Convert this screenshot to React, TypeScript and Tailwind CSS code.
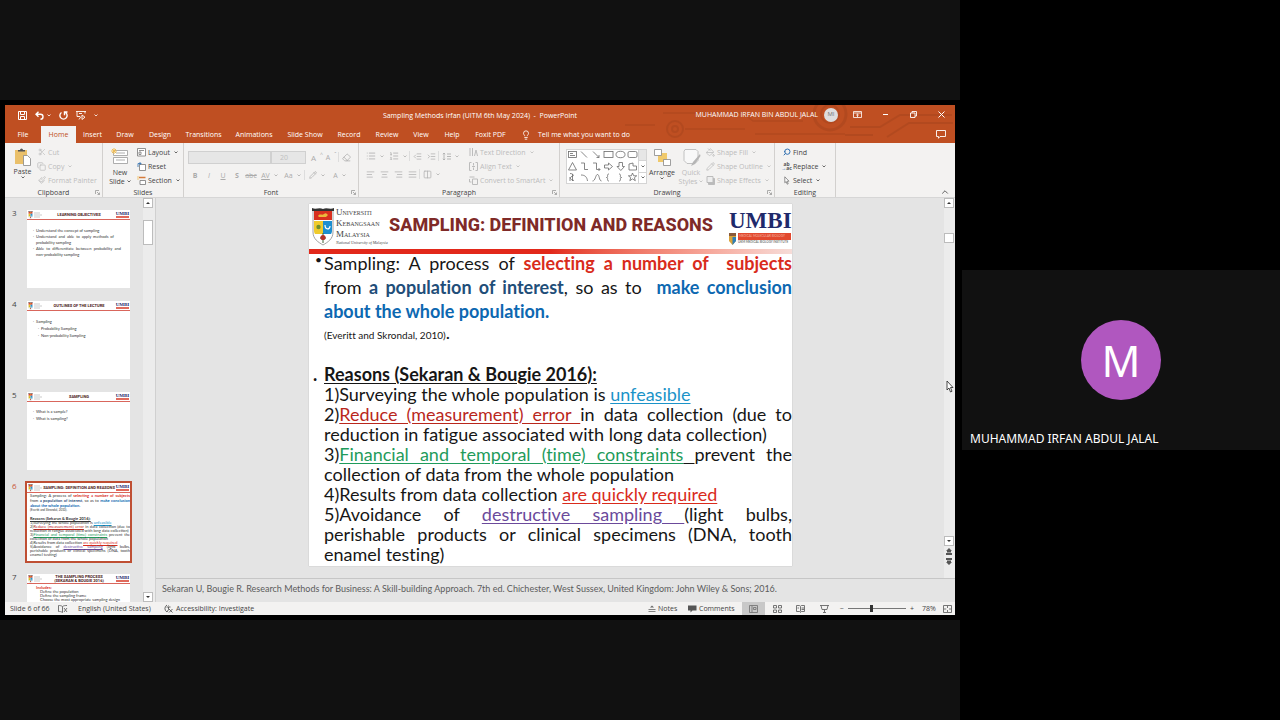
import type { ReactNode } from 'react';
import { clsx } from 'clsx';
import {
  AlignCenter,
  AlignJustify,
  AlignLeft,
  AlignRight,
  ChevronUp,
  Columns2,
  Copy,
  Eraser,
  Lightbulb,
  List,
  ListIndentDecrease,
  ListIndentIncrease,
  ListOrdered,
  Paintbrush,
  PaintBucket,
  Pencil,
  Scissors,
  Search,
} from 'lucide-react';

const tabs = [
  { label: 'File', width: 'w-[36px]' },
  { label: 'Home', width: 'w-[35px]' },
  { label: 'Insert', width: 'w-[33px]' },
  { label: 'Draw', width: 'w-[32px]' },
  { label: 'Design', width: 'w-[38px]' },
  { label: 'Transitions', width: 'w-[49px]' },
  { label: 'Animations', width: 'w-[52px]' },
  { label: 'Slide Show', width: 'w-[50px]' },
  { label: 'Record', width: 'w-[38px]' },
  { label: 'Review', width: 'w-[38px]' },
  { label: 'View', width: 'w-[30px]' },
  { label: 'Help', width: 'w-[32px]' },
  { label: 'Foxit PDF', width: 'w-[45px]' },
];

export default function App() {
  return (
    <main className="flex min-h-screen bg-black font-['Open_Sans',sans-serif]">
      <section className="flex w-3/4 flex-col justify-center bg-[#111111]">
        <div className="bg-black p-[5px]">
          <PowerPointWindow />
        </div>
      </section>
      <aside className="flex flex-1 flex-col justify-center pl-[2px]">
        <ParticipantTile name="MUHAMMAD IRFAN ABDUL JALAL" />
      </aside>
    </main>
  );
}

function ParticipantTile({ name }: { name: string }) {
  return (
    <div className="relative flex h-[180px] items-center justify-center bg-[#111111] font-['Noto_Sans',sans-serif] text-white">
      <div className="flex size-20 items-center justify-center rounded-full bg-[#b057bf] text-[43px] leading-none">
        {name[0]}
      </div>
      <p className="absolute bottom-[3px] left-2 text-[12px] leading-4">{name}</p>
    </div>
  );
}

function PowerPointWindow() {
  return (
    <div className="relative flex flex-col bg-[#e4e4e4] text-[7px] leading-[9px] text-[#444444]">
      <TitleBar />
      <Ribbon />
      <div className="flex h-[404px]">
        <ThumbnailPane />
        <div className="flex min-w-0 flex-1 flex-col border-l border-[#d0d0d0]">
          <div className="flex min-h-0 flex-1">
            <div className="flex flex-1 items-start justify-center pt-[6px] pl-px">
              <Slide />
            </div>
            <StageScrollbar />
          </div>
          <p className="h-[24px] border-t border-[#c6c6c6] px-[6px] pt-[4px] font-['Lato',sans-serif] text-[9px] leading-[12px] text-[#5c5c5c] [font-variant-ligatures:none]">
            Sekaran U, Bougie R. Research Methods for Business: A Skill-building Approach. 7th ed. Chichester, West Sussex, United Kingdom: John Wiley &amp; Sons; 2016.
          </p>
        </div>
      </div>
      <StatusBar />
      <svg viewBox="0 0 8 13" className="absolute top-[275px] right-[1px] h-[13px] w-[8px]">
        <path d="M1 1v9l2-2 1.500 4 1.500-.7L4.500 7.500H7z" fill="#fff" stroke="#222" strokeWidth=".8" />
      </svg>
    </div>
  );
}

/* ---------- title bar + tabs ---------- */

function TitleBar() {
  return (
    <header className="relative bg-[#bf4f22] text-white">
      <svg viewBox="0 0 330 38" className="absolute top-0 right-0 h-[38px] w-[330px]" fill="none" stroke="#a1421c" opacity=".4">
        <circle cx="50" cy="24" r="8" strokeWidth="2" />
        <circle cx="50" cy="24" r="3" strokeWidth="2" />
        <path d="M38 8h80l10 8h50M60 24h60M130 29h90M0 20h30" strokeWidth="1.500" />
        <circle cx="205" cy="9" r="16" strokeWidth="3" />
        <circle cx="205" cy="9" r="9" strokeWidth="2" />
        <path d="M225 22h30l20-12h52M262 32l22-14h44M220 30h28" strokeWidth="2" />
      </svg>
      <div className="relative flex h-[21px] items-center">
        <div className="flex w-[310px] items-center gap-[8px] pl-[13px]">
          <button aria-label="Save">
            <svg viewBox="0 0 9 9" className="size-[9px]" fill="none" stroke="currentColor">
              <path d="M.5.5h8v8h-8zM2.500.5v3h4v-3M2.500 8.500v-3h4v3" />
            </svg>
          </button>
          <button aria-label="Undo" className="flex items-center gap-[3px]">
            <svg viewBox="0 0 9 9" className="size-[9px]" fill="none" stroke="currentColor" strokeWidth="1.400">
              <path d="M3.500.7 1 3.200l2.500 2.500M1 3.200h4.500a2.500 2.500 0 0 1 0 5" />
            </svg>
            <Caret />
          </button>
          <button aria-label="Redo">
            <svg viewBox="0 0 9 9" className="size-[9px]" fill="none" stroke="currentColor" strokeWidth="1.400">
              <path d="M2.500 1.500a3.600 3.600 0 1 0 4 0M5.500 4.200V1h3" />
            </svg>
          </button>
          <button aria-label="Start slide show">
            <svg viewBox="0 0 10 9" className="h-[9px] w-[10px]" fill="none" stroke="currentColor" strokeWidth=".9">
              <path d="M0 .5h10M1 .5v5h3M9 .5v2M3 8.500l2-3M3 2.500h3M6 4l3 2.200L6 8.500z" />
            </svg>
          </button>
          <button aria-label="Customize toolbar">
            <Caret />
          </button>
        </div>
        <h1 className="flex-1 text-center">Sampling Methods Irfan (UITM 6th May 2024)&nbsp; -&nbsp; PowerPoint</h1>
        <div className="flex w-[310px] items-center justify-end pb-[2px]">
          <span className="mr-[6px]">MUHAMMAD IRFAN BIN ABDUL JALAL</span>
          <span className="mr-[6px] flex size-[14px] items-center justify-center rounded-full bg-[#dedede] text-[6px] text-[#777777]">MI</span>
          <div className="grid w-[111px] grid-cols-4 justify-items-center">
            <button aria-label="Ribbon display options">
              <svg viewBox="0 0 9 7" className="h-[7px] w-[9px]" fill="none" stroke="currentColor">
                <path d="M.5.5h8v6h-8zM.5 2h8M4.500 6V3.200M3.200 4.300l1.300-1.200 1.300 1.200" strokeWidth=".8" />
              </svg>
            </button>
            <button aria-label="Minimize">
              <svg viewBox="0 0 7 7" className="size-[7px]" stroke="currentColor"><path d="M1 3.500h5" /></svg>
            </button>
            <button aria-label="Restore">
              <svg viewBox="0 0 7 7" className="size-[7px]" fill="none" stroke="currentColor">
                <path d="M.5 2h4.500v4.500H.5zM2 2V.5h4.500V5H5" strokeWidth=".9" />
              </svg>
            </button>
            <button aria-label="Close">
              <svg viewBox="0 0 7 7" className="size-[7px]" stroke="currentColor"><path d="m.5.5 6 6m0-6-6 6" /></svg>
            </button>
          </div>
        </div>
      </div>
      <nav className="relative flex h-[17px] items-stretch">
        {tabs.map(tab => (
          <button
            key={tab.label}
            className={clsx(
              'shrink-0 text-center whitespace-nowrap',
              tab.width,
              tab.label === 'Home' && 'bg-[#f3f2f1] text-[#bf4f22]'
            )}
          >
            {tab.label}
          </button>
        ))}
        <button className="ml-[8px] flex items-center gap-[7px]">
          <Lightbulb className="size-[10px]" />
          Tell me what you want to do
        </button>
        <button aria-label="Comments" className="mr-[9px] ml-auto">
          <svg viewBox="0 0 10 9" className="h-[9px] w-[10px]" fill="none" stroke="currentColor" strokeWidth=".9">
            <path d="M.5.5h9v6H4L2.500 8.300V6.500h-2z" />
          </svg>
        </button>
      </nav>
    </header>
  );
}

function Caret() {
  return (
    <svg viewBox="0 0 4 3" className="h-[3px] w-[4px] shrink-0" fill="none" stroke="currentColor" strokeWidth=".8">
      <path d="m.5.5 1.500 1.500L3.500.5" />
    </svg>
  );
}

/* ---------- ribbon ---------- */

function Group({ label, width, launcher, children }: { label: string; width: string; launcher?: boolean; children: ReactNode }) {
  return (
    <section className={clsx('relative flex shrink-0 flex-col border-r border-[#d2d0ce]', width)}>
      <div className="flex h-[45px] pt-[2px]">{children}</div>
      <h2 className="text-center">{label}</h2>
      {launcher && (
        <button aria-label={`${label} options`} className="absolute right-[2px] bottom-[2px]">
          <svg viewBox="0 0 5 5" className="size-[5px]" fill="none" stroke="#999999" strokeWidth=".8">
            <path d="M.5 4V.5H4M2 2l2.500 2.500M4.500 2.500v2h-2" />
          </svg>
        </button>
      )}
    </section>
  );
}

function Row({ icon, label, caret, off }: { icon: ReactNode; label: string; caret?: boolean; off?: boolean }) {
  return (
    <button className={clsx('flex h-[14px] items-center gap-[2px] whitespace-nowrap', off && 'text-[#bcbcbc]')}>
      <span className="flex w-[9px] justify-center">{icon}</span>
      {label}
      {caret && <span className="pl-[2px]"><Caret /></span>}
    </button>
  );
}

function Tool({ label, wide, children }: { label: string; wide?: boolean; children: ReactNode }) {
  return (
    <button aria-label={label} className={clsx('flex h-[14px] items-center justify-center gap-[4px]', wide ? 'w-[23px]' : 'w-[14px]')}>
      {children}
      {wide && <Caret />}
    </button>
  );
}

function Divider() {
  return <span className="h-[10px] w-px bg-[#dddddd]" />;
}

function Ribbon() {
  return (
    <div className="relative flex h-[55px] border-b border-[#d6d6d6] bg-[#f3f2f1]">
      <Group label="Clipboard" width="w-[98px]" launcher>
        <button className="flex w-[32px] flex-col items-center pt-[3px] pl-[3px]">
          <svg viewBox="0 0 18 18" className="size-[18px]">
            <rect x="1" y="2" width="12" height="14" fill="#eac06a" />
            <path d="M4 3.500V2h2a1.500 1.500 0 0 1 3 0h2v1.500z" fill="#555" />
            <path d="M9.500 7.500h4l3 3v7h-7z" fill="#fff" stroke="#888" strokeWidth=".8" />
          </svg>
          <span className="pt-[1px]">Paste</span>
          <Caret />
        </button>
        <div>
          <Row off label="Cut" icon={<Scissors className="size-[8px]" />} />
          <Row off caret label="Copy" icon={<Copy className="size-[9px]" />} />
          <Row off label="Format Painter" icon={<Paintbrush className="size-[8px]" />} />
        </div>
      </Group>

      <Group label="Slides" width="w-[81px]">
        <button className="flex w-[34px] flex-col items-center pt-[3px]">
          <svg viewBox="0 0 18 17" className="h-[17px] w-[18px]" fill="#fff" stroke="#999">
            <path d="M2.500 2.500h14v5h-14zM2.500 9.500h14v6h-14zM5 5h9M5 12h9" strokeWidth=".8" />
            <path d="M3 0v6M0 3h6M1 1l4 4m0-4L1 5" stroke="#f0bd55" />
          </svg>
          <span className="pt-[3px]">New</span>
          <span className="flex items-center gap-[2px]">Slide <Caret /></span>
        </button>
        <div>
          <Row
            caret
            label="Layout"
            icon={<svg viewBox="0 0 9 9" className="size-[9px]" fill="#fff" stroke="#777" strokeWidth=".8"><path d="M.5.5h8v7.500h-8zM2 2.500h5M2 4h2v2.500H2z" /></svg>}
          />
          <Row
            label="Reset"
            icon={<svg viewBox="0 0 9 9" className="size-[9px]" fill="#fff" stroke="#777" strokeWidth=".8"><path d="M2.500 2.500h6V8.500h-6z" /><path d="M1 5V1.500h3.500M3 0v3" stroke="#2f6fb0" fill="none" /></svg>}
          />
          <Row
            caret
            label="Section"
            icon={<svg viewBox="0 0 9 9" className="size-[9px]" fill="#fff" stroke="#777" strokeWidth=".8"><path d="M3 4.500h5.500V8.500H3z" /><path d="M2 1.500h6.500" stroke="#d57b3a" strokeWidth="1.500" /><path d="M1 0v4" stroke="#f0bd55" /></svg>}
          />
        </div>
      </Group>

      <Group label="Font" width="w-[175px]" launcher>
        <div className="flex flex-1 flex-col gap-[4px] pt-[5px] pl-[4px] text-[#ababab]">
          <div className="flex h-[14px] items-center">
            <select aria-label="Font" disabled className="h-[13px] w-[83px] appearance-none border border-[#d0d0d0] bg-[#e6e6e6]" />
            <select aria-label="Font size" disabled className="mr-[4px] h-[13px] w-[35px] appearance-none border border-[#d0d0d0] bg-[#e6e6e6] pl-[8px] text-[7px] text-[#c0c0c0]">
              <option>20</option>
            </select>
            <Tool label="Increase font size"><span className="text-[8px]">A</span><sup>^</sup></Tool>
            <Tool label="Decrease font size">A<sup>ˇ</sup></Tool>
            <Divider />
            <Tool label="Clear formatting"><Eraser className="size-[9px]" /></Tool>
          </div>
          <div className="flex h-[14px] items-center">
            <Tool label="Bold"><b>B</b></Tool>
            <Tool label="Italic"><i>I</i></Tool>
            <Tool label="Underline"><u>U</u></Tool>
            <Tool label="Shadow"><b>S</b></Tool>
            <Tool label="Strikethrough"><s>abc</s></Tool>
            <Tool label="Character spacing" wide><u>AV</u></Tool>
            <Tool label="Change case" wide>Aa</Tool>
            <Divider />
            <Tool label="Highlight" wide><Pencil className="size-[8px]" /></Tool>
            <Tool label="Font color" wide>A</Tool>
          </div>
        </div>
      </Group>

      <Group label="Paragraph" width="w-[201px]" launcher>
        <div className="flex w-[110px] flex-col gap-[4px] pt-[4px] pl-[4px] text-[#b0b0b0]">
          <div className="flex h-[14px] items-center">
            <Tool label="Bullets" wide><List className="size-[10px]" /></Tool>
            <Tool label="Numbering" wide><ListOrdered className="size-[10px]" /></Tool>
            <Divider />
            <Tool label="Decrease indent"><ListIndentDecrease className="size-[9px]" /></Tool>
            <Tool label="Increase indent"><ListIndentIncrease className="size-[9px]" /></Tool>
            <Divider />
            <Tool label="Line spacing" wide>
              <svg viewBox="0 0 9 9" className="size-[9px]" fill="none" stroke="currentColor" strokeWidth=".9">
                <path d="M2 1v7M.8 2.200 2 1l1.200 1.200M.8 6.800 2 8l1.200-1.200M5 2h4M5 4.500h4M5 7h4" />
              </svg>
            </Tool>
          </div>
          <div className="flex h-[14px] items-center">
            <Tool label="Align left"><AlignLeft className="size-[9px]" /></Tool>
            <Tool label="Center"><AlignCenter className="size-[9px]" /></Tool>
            <Tool label="Align right"><AlignRight className="size-[9px]" /></Tool>
            <Tool label="Justify"><AlignJustify className="size-[9px]" /></Tool>
            <Divider />
            <Tool label="Columns" wide><Columns2 className="size-[9px]" /></Tool>
          </div>
        </div>
        <div>
          <Row
            off
            caret
            label="Text Direction"
            icon={<svg viewBox="0 0 9 9" className="size-[9px]" fill="none" stroke="currentColor"><path d="M1 0v8M3.500 0v8M5.500 8l1.500-6 1.500 6" /></svg>}
          />
          <Row
            off
            caret
            label="Align Text"
            icon={<svg viewBox="0 0 9 9" className="size-[9px]" fill="none" stroke="currentColor"><path d="M2.500.5h-2v8h2M6.500.5h2v8h-2M4.500 1v2.500M4.500 8V5.500M3 4.500h3" /></svg>}
          />
          <Row
            off
            caret
            label="Convert to SmartArt"
            icon={<svg viewBox="0 0 9 9" className="size-[9px]" fill="none" stroke="currentColor"><path d="M3.500 3h5v5.500h-5zM.5 1h5M.5 3v3h2" /></svg>}
          />
        </div>
      </Group>

      <Group label="Drawing" width="w-[215px]" launcher>
        <ShapeGallery />
        <button className="flex w-[30px] flex-col items-center pt-[4px]">
          <svg viewBox="0 0 17 17" className="size-[17px]" stroke="#888" strokeWidth=".8">
            <path d="M4 4h9v9H4z" fill="#f0c96a" stroke="none" />
            <path d="M.5.5h7v6h-7zM9.500 10.500h7v6h-7z" fill="#fff" />
          </svg>
          <span className="pt-[2px]">Arrange</span>
          <Caret />
        </button>
        <button className="flex w-[28px] flex-col items-center pt-[4px] text-[#bcbcbc]">
          <svg viewBox="0 0 19 17" className="h-[17px] w-[19px]" fill="#f8f8f8" stroke="#bbb">
            <path d="M3 .5h11l2 2v9l-3 3H5l-3-3v-9z" strokeWidth=".9" />
            <path d="m18 5-7 8-2 4 4-2 5.500-8z" fill="#b5b5b5" stroke="none" />
          </svg>
          <span className="pt-[2px]">Quick</span>
          <span className="flex items-center gap-[2px]">Styles <Caret /></span>
        </button>
        <div className="pl-[1px]">
          <Row off caret label="Shape Fill" icon={<PaintBucket className="size-[9px]" />} />
          <Row off caret label="Shape Outline" icon={<Pencil className="size-[9px]" />} />
          <Row
            off
            caret
            label="Shape Effects"
            icon={<svg viewBox="0 0 9 9" className="size-[9px]" fill="#eee" stroke="currentColor"><path d="M2.500 2.500h6v6h-6z" fill="#bbb" /><path d="M1 .5h6v6H1z" /></svg>}
          />
        </div>
      </Group>

      <Group label="Editing" width="w-[61px]">
        <div className="pl-[7px]">
          <Row label="Find" icon={<Search className="size-[8px] -scale-x-100 text-[#2f6fb0]" strokeWidth={3} />} />
          <Row
            caret
            label="Replace"
            icon={<span className="text-[5px] leading-[4px] font-bold text-[#555555]">ab<br /><span className="text-[#2f6fb0]">→</span>ac</span>}
          />
          <Row
            caret
            label="Select"
            icon={<svg viewBox="0 0 6 9" className="h-[9px] w-[6px]" fill="#fff" stroke="#777" strokeWidth=".8"><path d="M.8.8v6l1.400-1.300 1 2.700 1-.4-1-2.600h1.800z" /></svg>}
          />
        </div>
      </Group>
      <button aria-label="Collapse ribbon" className="absolute right-[5px] bottom-0">
        <ChevronUp className="size-[10px]" />
      </button>
    </div>
  );
}

function ShapeGallery() {
  return (
    <div className="mt-[4px] ml-[6px] flex h-[35px] w-[81px] border border-[#d4d4d4] bg-white">
      <svg viewBox="0 0 71 33" className="h-[33px] w-[71px]" fill="none" stroke="#6a6a6a" strokeWidth=".8">
        <rect x="1.500" y="1.500" width="8" height="6" />
        <path d="M3 3.500h3M3 5.500h5" />
        <path d="m14 1.500 6 6M26 1.500l6 6M32 5v2.500h-2.500" />
        <rect x="37" y="1.500" width="9" height="6" />
        <ellipse cx="53.500" cy="4.500" rx="4.500" ry="3.200" />
        <rect x="61" y="1.500" width="9" height="6" rx="1.500" />
        <path d="m5.500 12.500 4 7.500h-8zM14 13h3.500v6.500H21M26 13h3.500v6.500H33M31.500 18l1.500 1.500-1.500 1.500" />
        <path d="M37.500 15h4v-2l4 3.500-4 3.500v-2h-4zM52 12.500h3.500v4h2L53.800 20.500 50 16.500h2zM62 14l4-1v3h3.500v4H62z" />
        <path d="M3 23.500c4 0 4 3 2 3s-3 3 2 4M3 27v4M5.500 24v7M14 25c4 0 6 2 6.500 6M25.500 31c3 0 3-6.500 5-6.500s1.500 6.500 4 6.500" />
        <path d="M42 24c-3 0 0 3.500-2.500 3.500 2.500 0-.5 3.500 2.500 3.500M52 24c3 0 0 3.500 2.500 3.500-2.500 0 .5 3.500-2.500 3.500" />
        <path d="m65.500 23 1.200 2.800h3l-2.300 1.900.9 3-2.800-1.800-2.700 1.800.9-3-2.300-1.900h3z" />
      </svg>
      <div className="flex flex-1 flex-col items-stretch divide-y divide-[#d4d4d4] border-l border-[#d4d4d4]">
        <button aria-label="Previous shapes" className="flex-1 bg-[#e6e6e6]" />
        <button aria-label="Next shapes" className="flex flex-1 items-center justify-center"><Caret /></button>
        <button aria-label="More shapes" className="flex flex-1 items-center justify-center"><Caret /></button>
      </div>
    </div>
  );
}

/* ---------- thumbnails ---------- */

function ThumbnailPane() {
  return (
    <div className="flex w-[150px] shrink-0">
      <ol className="flex flex-1 flex-col gap-[13px] overflow-hidden pt-[12px]">
        <Thumb no={3} title="LEARNING OBJECTIVES">
          <ul className="list-['·__'] px-[9px] pt-[8px] text-[4px] leading-[6px]">
            <li>Understand the concept of sampling</li>
            <li className="mr-[7px] text-justify">Understand and able to apply methods of probability sampling</li>
            <li className="text-justify">Able to differentiate between probability and non-probability sampling</li>
          </ul>
        </Thumb>
        <Thumb no={4} title="OUTLINES OF THE LECTURE">
          <ul className="list-['·__'] px-[9px] pt-[7px] text-[4px] leading-[7px]">
            <li>Sampling</li>
            <li className="ml-[5px]">Probability Sampling</li>
            <li className="ml-[5px]">Non-probability Sampling</li>
          </ul>
        </Thumb>
        <Thumb no={5} title="SAMPLING">
          <ul className="list-['·__'] px-[9px] pt-[6px] text-[4px] leading-[7px]">
            <li>What is a sample?</li>
            <li>What is sampling?</li>
          </ul>
        </Thumb>
        <Thumb no={6} title="SAMPLING: DEFINITION AND REASONS" active>
          <div className="pl-[3px] text-[4px] leading-[4px] [&>p]:[text-align-last:justify]">
            <div className="leading-[5px] [&>p]:[text-align-last:justify]">
              <p>Sampling: A process of <b className="text-[#d92b1c]">selecting a number of subjects</b></p>
              <p>from <b className="text-[#1f4e79]">a population of interest</b>, so as to <b className="text-[#0d68b1]">make conclusion</b></p>
              <b className="text-[#0d68b1]">about the whole population.</b>
            </div>
            <div className="pb-[5px] text-[3px]">(Everitt and Skrondal, 2010).</div>
            <div><b className="underline">Reasons (Sekaran &amp; Bougie 2016):</b></div>
            <div>1)Surveying the whole population is <u className="text-[#1b93c8]">unfeasible</u></div>
            <p>2)<u className="text-[#b9271c]">Reduce (measurement) error</u> in data collection (due to</p>
            <div>reduction in fatigue associated with long data collection)</div>
            <p>3)<u className="text-[#1f9b5b]">Financial and temporal (time) constraints</u> prevent the</p>
            <div>collection of data from the whole population</div>
            <div>4)Results from data collection <u className="text-[#d92b1c]">are quickly required</u></div>
            <p>5)Avoidance of <u className="text-[#6b4a9b]">destructive sampling</u> (light bulbs,</p>
            <p>perishable products or clinical specimens (DNA, tooth</p>
            <div>enamel testing)</div>
          </div>
        </Thumb>
        <Thumb no={7} title={'THE SAMPLING PROCESS\n(SEKARAN & BOUGIE 2016)'}>
          <ol className="px-[9px] pt-[2px] text-[4px] leading-[4px]">
            <li className="font-bold text-[#d92b1c]">Includes:</li>
            <li className="pl-[4px]">Define the population</li>
            <li className="pl-[4px]">Define the sampling frame</li>
            <li className="pl-[4px]">Choose the most appropriate sampling design</li>
          </ol>
        </Thumb>
      </ol>
      <div className="flex w-[12px] flex-col justify-between bg-[#ececec]">
        <div>
          <ScrollButton label="Scroll thumbnails up" path="M1 4 3 2l2 2z" />
          <div className="mt-[12px] h-[25px] w-[10px] border border-[#bcbcbc] bg-white" />
        </div>
        <ScrollButton label="Scroll thumbnails down" path="M1 2l2 2 2-2z" />
      </div>
    </div>
  );
}

function Thumb({ no, title, active, children }: { no: number; title: string; active?: boolean; children: ReactNode }) {
  return (
    <li className="flex h-[78px] shrink-0">
      <span className={clsx('w-[22px] pl-[7px] text-[8px] leading-[6px]', active && 'text-[#c8553a]')}>{no}</span>
      <div
        className={clsx(
          "h-[78px] w-[103px] overflow-hidden bg-white font-['Lato',sans-serif] text-[#333333]",
          active && 'outline-2 outline-[#bf4f33]'
        )}
      >
        <div className="flex h-[10px] items-center justify-between border-b border-[#d9665c] px-[1px]">
          <div className="flex w-[14px] gap-[1px]">
            <Shield className="h-[8px] w-[5px] shrink-0" />
            <svg viewBox="0 0 8 8" className="size-[8px]" stroke="#aaa" strokeWidth=".6"><path d="M0 2h6M0 4h8M0 6h6" /></svg>
          </div>
          <b className="text-center font-['Roboto',sans-serif] text-[4px] leading-[4px] whitespace-pre text-[#4a2020]">{title}</b>
          <div className="flex w-[13px] flex-col items-center font-['Liberation_Serif',serif]">
            <b className="text-[5px] leading-[5px] text-[#1f2a6b]">UMBI</b>
            <span className="h-[2px] w-full bg-[#e06a5c]" />
          </div>
        </div>
        {children}
      </div>
    </li>
  );
}

function ScrollButton({ label, path }: { label: string; path: string }) {
  return (
    <button aria-label={label} className="flex size-[10px] items-center justify-center border border-[#bcbcbc] bg-white">
      <svg viewBox="0 0 6 6" className="size-[6px]" fill="#333"><path d={path} /></svg>
    </button>
  );
}

/* ---------- slide ---------- */

function Shield({ className }: { className: string }) {
  return (
    <svg viewBox="0 0 22 39" className={className}>
      <path d="M1 3h20v22c0 7-5 10-10 13C6 35 1 32 1 25z" fill="#fff" stroke="#8a8a8a" strokeWidth=".8" />
      <path d="M0 1c4 2 7-1 11 1 4-2 7 1 11-1v3H0z" fill="#333" />
      <path d="M2 4h18v9H2z" fill="#d8301f" />
      <path d="M6 9c2-3 4 0 6-2s3 0 4 1l-2 2H7z" fill="#eab93c" />
      <path d="M2 14h9v13H3c-1-1-1-3-1-4z" fill="#efcb2d" />
      <path d="M11 14h9v9c0 1 0 3-1 4h-8z" fill="#1d8fd0" />
      <circle cx="6.500" cy="20" r="2.200" fill="#6f8f2c" />
      <path d="M13 18c0 5 5 5 5 1" stroke="#fff" strokeWidth="1.200" fill="none" />
      <path d="M11 26v10M8 31h6" stroke="#3c5f35" />
      <circle cx="11" cy="30.500" r="2.600" fill="#b5322a" />
    </svg>
  );
}

function Slide() {
  return (
    <article className="h-[362px] w-[483px] bg-white font-['Lato',sans-serif] text-[18px] leading-[20px] text-[#161616] shadow-[0_0_1px_#aaaaaa] [font-variant-ligatures:none]">
      <div className="flex h-[45px] items-center pr-[1px] pl-[3px]">
        <Shield className="h-[39px] w-[22px] shrink-0" />
        <div className="w-[48px] shrink-0 pl-[2px] font-['Liberation_Serif',serif] text-[6px] leading-[10px] whitespace-nowrap text-[#444444] uppercase">
          <p><span className="text-[9px]">U</span>niversiti</p>
          <p><span className="text-[9px]">K</span>ebangsaan</p>
          <p><span className="text-[9px]">M</span>alaysia</p>
          <p className="text-[4px] leading-[6px] normal-case italic">National University of Malaysia</p>
        </div>
        <h2 className="flex-1 pr-[9px] pb-[4px] text-center font-['Roboto',sans-serif] text-[18px] leading-[24px] font-extrabold whitespace-nowrap text-[#7f2a28]">
          SAMPLING: DEFINITION AND REASONS
        </h2>
        <div className="w-[62px] shrink-0">
          <p className="font-['Liberation_Serif',serif] text-[23px] leading-[24px] font-bold text-[#1f2a6b]">UMBI</p>
          <div className="flex items-center gap-[2px]">
            <svg viewBox="0 0 7 12" className="h-[12px] w-[7px] shrink-0">
              <path d="M0 0h7v8L3.500 12 0 8z" fill="#d9a33a" />
              <path d="M3.500 4H7v4L3.500 12z" fill="#2f7fb8" />
              <path d="M0 0h7v3H0z" fill="#8a5a3a" />
            </svg>
            <div className="flex-1 text-[3px] leading-[4px] whitespace-nowrap">
              <p className="h-[7px] bg-[#e2492f] pl-[1px] leading-[7px] text-[#f4b8a8]">MEDICAL MOLECULAR BIOLOGY</p>
              <p className="h-[4px] text-[#444444]">UKM MEDICAL BIOLOGY INSTITUTE</p>
            </div>
          </div>
        </div>
      </div>
      <div className="h-[5px] bg-linear-to-r from-[#e2281a] from-50% to-[#f6dcd8]" />

      <div className="-mt-[3px] pl-[15px]">
        <div className="relative leading-[24px]">
          <span className="absolute -top-[3px] -left-[9px] text-[12px]">•</span>
          <p className="[text-align-last:justify]">
            Sampling: A process of <b className="text-[#d92b1c]">selecting a number of &nbsp;subjects</b>
          </p>
          <p className="[text-align-last:justify]">
            from <b className="text-[#1f4e79]">a population of interest</b>, so as to <b className="text-[#0d68b1]">&nbsp;make conclusion</b>
          </p>
          <p><b className="text-[#0d68b1]">about the whole population.</b></p>
        </div>
        <p className="pb-5 leading-[18px]"><span className="text-[10px]">(Everitt and Skrondal, 2010)</span>.</p>
        <p className="relative">
          <b className="absolute -left-[11px]">.</b>
          <b className="underline underline-offset-2">Reasons (Sekaran &amp; Bougie 2016):</b>
        </p>
        <p>1)Surveying the whole population is <u className="text-[#1b93c8] underline-offset-2">unfeasible</u></p>
        <p className="[text-align-last:justify]">
          2)<u className="text-[#b9271c] underline-offset-2">Reduce (measurement) error </u>in data collection (due to
        </p>
        <p>reduction in fatigue associated with long data collection)</p>
        <p className="[text-align-last:justify]">
          3)<u className="text-[#1f9b5b] underline-offset-2">Financial and temporal (time) constraints</u><u className="underline-offset-2"> </u>prevent the
        </p>
        <p>collection of data from the whole population</p>
        <p>4)Results from data collection <u className="text-[#d92b1c] underline-offset-2">are quickly required</u></p>
        <p className="[text-align-last:justify]">
          5)Avoidance of <u className="text-[#6b4a9b] underline-offset-2">destructive sampling </u>(light bulbs,
        </p>
        <p className="[text-align-last:justify]">perishable products or clinical specimens (DNA, tooth</p>
        <p>enamel testing)</p>
      </div>
    </article>
  );
}

function StageScrollbar() {
  return (
    <div className="flex w-[11px] flex-col justify-between bg-[#ececec]">
      <div>
        <ScrollButton label="Scroll up" path="M1 4 3 2l2 2z" />
        <div className="mt-[25px] size-[10px] border border-[#bcbcbc] bg-white" />
      </div>
      <div className="pb-[12px]">
        <ScrollButton label="Scroll down" path="M1 2l2 2 2-2z" />
        <button aria-label="Previous slide" className="flex h-[10px] w-[10px] items-center justify-center">
          <svg viewBox="0 0 6 7" className="h-[7px] w-[6px]" fill="#555"><path d="m3 0 3 3H0zM1 3h4v1.500H1zM0 5h6v2H0z" /></svg>
        </button>
        <button aria-label="Next slide" className="flex h-[10px] w-[10px] items-center justify-center">
          <svg viewBox="0 0 6 7" className="h-[7px] w-[6px]" fill="#555"><path d="M0 0h6v2H0zM1 2.500h4V4H1zM0 4h6L3 7z" /></svg>
        </button>
      </div>
    </div>
  );
}

/* ---------- status bar ---------- */

function StatusBar() {
  return (
    <footer className="flex h-[13px] items-center bg-[#f3f2f1]">
      <span className="w-[53px] pl-[5px]">Slide 6 of 66</span>
      <svg viewBox="0 0 10 8" className="mr-[10px] h-[8px] w-[10px]" fill="none" stroke="#666" strokeWidth=".9">
        <path d="M4.500 1.500C3 .5 2 .5.5.5v6c1.500 0 2.500 0 4 1zM4.500 1.500C6 .5 7 .5 9 .5M6 3l3 4M9 3 6 7" />
      </svg>
      <span className="w-[86px]">English (United States)</span>
      <svg viewBox="0 0 9 9" className="mr-[3px] size-[9px]" fill="none" stroke="#555" strokeWidth=".9">
        <path d="M3 1a4 4 0 0 0 0 7M4.500 1v.5M2.500 3h4M4.500 3v2.500L3 8M5 5l3.500 3.500M8.500 5 5 8.500" />
      </svg>
      <span>Accessibility: Investigate</span>
      <div className="ml-auto flex h-full items-center">
        <button className="flex w-[40px] items-center gap-[2px]">
          <svg viewBox="0 0 8 8" className="size-[8px]" stroke="#666" fill="#666"><path d="M.5 4.500h7M.5 6.500h7" strokeWidth=".8" /><path d="m4 .5 2 2H2z" stroke="none" /></svg>
          Notes
        </button>
        <button className="flex w-[54px] items-center gap-[2px]">
          <svg viewBox="0 0 9 8" className="h-[8px] w-[9px]" fill="#555"><path d="M0 .5h8.500v5H4.500l-2 2v-2H0z" /></svg>
          Comments
        </button>
        <button aria-label="Normal view" className="flex h-full w-[23px] items-center justify-center bg-[#c8c8c8]">
          <svg viewBox="0 0 9 8" className="h-[8px] w-[9px]" fill="none" stroke="#777" strokeWidth=".9"><path d="M.5.5h8v7h-8zM3 .5v7M4.500 2.500h2.500v2H4.500z" /></svg>
        </button>
        <button aria-label="Slide sorter" className="flex w-[24px] justify-center">
          <svg viewBox="0 0 9 8" className="h-[8px] w-[9px]" fill="none" stroke="#666" strokeWidth=".9"><path d="M.5.5h3v2.500h-3zM5.500.5h3v2.500h-3zM.5 5h3v2.500h-3zM5.500 5h3v2.500h-3z" /></svg>
        </button>
        <button aria-label="Reading view" className="flex w-[23px] justify-center">
          <svg viewBox="0 0 9 8" className="h-[8px] w-[9px]" fill="none" stroke="#666" strokeWidth=".9"><path d="M.5.5h3.200l.8.8.8-.8h3.200v6H5.300l-.8 1-.8-1H.5zM4.500 1.500v5M5.500 3H8M1.500 3H3M5.500 4.500H8" /></svg>
        </button>
        <button aria-label="Slide show" className="flex w-[24px] justify-center">
          <svg viewBox="0 0 9 8" className="h-[8px] w-[9px]" fill="none" stroke="#666" strokeWidth=".9"><path d="M0 .5h9M1 .5l1 4h5l1-4M4.500 4.500V7.500M3 7.500h3" /></svg>
        </button>
        <button aria-label="Zoom out" className="w-[12px] text-center">−</button>
        <input
          type="range"
          aria-label="Zoom"
          min={10}
          max={400}
          defaultValue={165}
          className="h-[9px] w-[58px] appearance-none bg-linear-to-b from-transparent from-45% via-[#777777] via-50% to-transparent to-55% [&::-webkit-slider-thumb]:h-[7px] [&::-webkit-slider-thumb]:w-[3px] [&::-webkit-slider-thumb]:appearance-none [&::-webkit-slider-thumb]:bg-[#333333]"
        />
        <button aria-label="Zoom in" className="w-[12px] text-center">+</button>
        <span className="w-[25px] pl-[4px]">78%</span>
        <button aria-label="Fit slide to window" className="mr-[3px]">
          <svg viewBox="0 0 9 8" className="h-[8px] w-[9px]" fill="none" stroke="#666" strokeWidth=".9"><path d="M.5.5h8v7h-8zM4.500 1v2M4.500 5v2M1 4h2.200M6 4h2.200" /></svg>
        </button>
      </div>
    </footer>
  );
}
